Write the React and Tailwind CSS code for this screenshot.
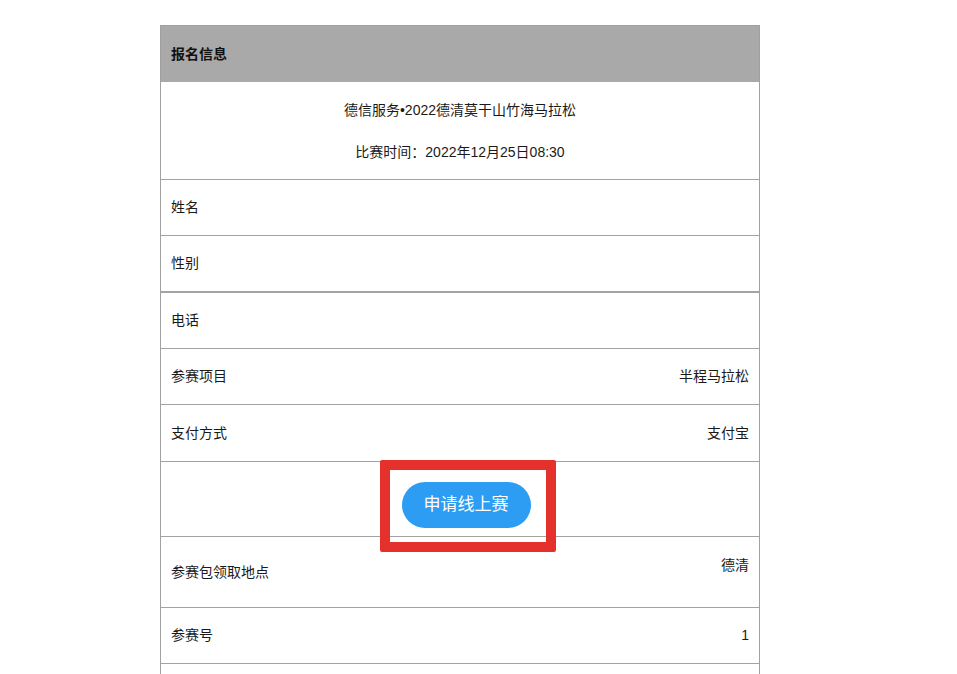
import React from 'react';

const rows = [
  { label: '姓名', value: '', h: 'h-[56px]', border: 'border-t' },
  { label: '性别', value: '', h: 'h-[56px]', border: 'border-t' },
  { label: '电话', value: '', h: 'h-[57px]', border: 'border-t-2' },
  { label: '参赛项目', value: '半程马拉松', h: 'h-[56px]', border: 'border-t' },
  { label: '支付方式', value: '支付宝', h: 'h-[57px]', border: 'border-t' },
];

const Row = ({ label, value, h, border }) => (
  <div className={`${h} ${border} border-[#a3a3a3] flex items-center justify-between px-[10px]`}>
    <span>{label}</span>
    <span>{value}</span>
  </div>
);

export default function App() {
  return (
    <div
      className="h-[674px] bg-white pl-[160px] pt-[25px] text-[14px] text-[#1a1a1a] overflow-hidden"
      style={{ fontFamily: '"Liberation Sans", "Noto Sans CJK SC", sans-serif' }}
    >
      <div className="w-[600px] border-x border-t border-[#a0a0a0]">
        <div className="h-[56px] bg-[#a9a9a9] flex items-center px-[10px] font-bold text-[#111]">
          报名信息
        </div>

        <div className="h-[97px] flex flex-col items-center pt-[18px] gap-[21px]">
          <div>德信服务•2022德清莫干山竹海马拉松</div>
          <div>比赛时间：2022年12月25日08:30</div>
        </div>

        {rows.map(r => (
          <Row key={r.label} {...r} />
        ))}

        <div className="relative h-[75px] border-t border-[#a3a3a3] flex items-center justify-center">
          <button className="ml-[12px] mt-[11px] w-[129px] h-[46px] rounded-full bg-[#2c9df2] text-white text-[17px]">
            申请线上赛
          </button>
          <div className="absolute left-[219px] top-[-2px] w-[176px] h-[92px] border-[10px] border-[#e4312b] rounded-[2px]" />
        </div>

        <div className="h-[71px] border-t border-[#a3a3a3] flex items-center justify-between px-[10px]">
          <span>参赛包领取地点</span>
          <span className="mb-[14px]">德清</span>
        </div>

        <div className="h-[56px] border-t border-[#a3a3a3] flex items-center justify-between px-[10px]">
          <span>参赛号</span>
          <span>1</span>
        </div>

        <div className="h-[56px] border-t border-[#a3a3a3]" />
      </div>
    </div>
  );
}
